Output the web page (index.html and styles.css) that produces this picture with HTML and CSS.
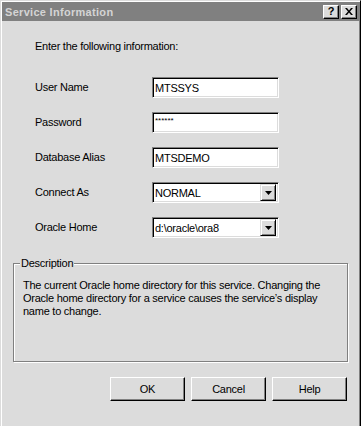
FILE: index.html
```html
<!DOCTYPE html>
<html lang="en">
<head>
    <meta charset="UTF-8">
    <meta name="viewport" content="width=device-width, initial-scale=1.0">
    <title>Service Information</title>
    <link rel="stylesheet" href="styles.css">
</head>
<body>
    <div class="window">
        <div class="titlebar">
            <span class="title">Service Information</span>
            <div class="title-buttons">
                <span class="tbtn">?</span>
                <span class="tbtn">
                    <svg width="8" height="7" viewBox="0 0 8 7">
                        <path d="M0 0h2l2 2.5 2-2.5h2l-3 3.5 3 3.5h-2l-2-2.5-2 2.5h-2l3-3.5z" fill="#000"/>
                    </svg>
                </span>
            </div>
        </div>

        <div class="content">
            <p class="intro">Enter the following information:</p>

            <div class="form">
                <label>User Name</label>
                <div class="field">MTSSYS</div>

                <label>Password</label>
                <div class="field password">******</div>

                <label>Database Alias</label>
                <div class="field">MTSDEMO</div>

                <label>Connect As</label>
                <div class="field combo">
                    <span class="combo-text">NORMAL</span>
                    <span class="arrow-btn">
                        <svg width="7" height="4" viewBox="0 0 7 4"><path d="M0 0h7l-3.5 4z" fill="#000"/></svg>
                    </span>
                </div>

                <label>Oracle Home</label>
                <div class="field combo">
                    <span class="combo-text">d:\oracle\ora8</span>
                    <span class="arrow-btn">
                        <svg width="7" height="4" viewBox="0 0 7 4"><path d="M0 0h7l-3.5 4z" fill="#000"/></svg>
                    </span>
                </div>
            </div>

            <fieldset class="desc">
                <legend>Description</legend>
                <p>The current Oracle home directory for this service. Changing the Oracle home directory for a service causes the service’s display name to change.</p>
            </fieldset>

            <div class="buttons">
                <button>OK</button>
                <button>Cancel</button>
                <button>Help</button>
            </div>
        </div>
    </div>
</body>
</html>
```

FILE: styles.css
```css
body {
    margin: 0;
    font-family: "Liberation Sans", Arial, sans-serif;
    font-size: 11px;
    color: #000;
    background-color: #dcdcdc;
}
.window {
    box-sizing: border-box;
    width: 361px;
    height: 426px;
    border: 1px solid;
    border-color: #dcdcdc #000 #dcdcdc #dcdcdc;
    border-bottom: 0;
    padding: 1px 1px 0 1px;
    box-shadow: inset 1px 1px #fff, inset -1px 0 #808080;
    background-color: #dcdcdc;
}
.titlebar {
    height: 19px;
    background-color: #808080;
    display: flex;
    align-items: center;
    padding: 0 2px 0 3px;
}
.title {
    color: #d4d4d4;
    font-weight: bold;
    letter-spacing: 0.3px;
}
.title-buttons {
    margin-left: auto;
    display: flex;
    gap: 2px;
}
.tbtn {
    box-sizing: border-box;
    width: 16px;
    height: 14px;
    background-color: #dcdcdc;
    border: 1px solid;
    border-color: #fff #000 #000 #fff;
    box-shadow: inset -1px -1px #808080;
    display: flex;
    align-items: center;
    justify-content: center;
    font-weight: bold;
    font-size: 11px;
    line-height: 11px;
}
.content {
    padding: 0 11px;
}
.intro {
    margin: 19px 0 0 22px;
    line-height: 13px;
    letter-spacing: -0.25px;
}
.form {
    display: grid;
    grid-template-columns: 117px 127px;
    row-gap: 14px;
    align-items: center;
    margin: 24px 0 0 22px;
}
.form label {
    line-height: 13px;
    letter-spacing: -0.25px;
}
.field {
    box-sizing: border-box;
    height: 21px;
    background-color: #fff;
    border: 1px solid;
    border-color: #808080 #fff #fff #808080;
    box-shadow: inset 1px 1px #000, inset -1px -1px #dcdcdc;
    padding: 0 2px 0 2px;
    display: flex;
    align-items: center;
    letter-spacing: -0.25px;
}
.password {
    align-items: flex-start;
    font-size: 8px;
    padding-top: 3px;
    letter-spacing: 0;
}
.combo {
    padding: 2px;
}
.combo-text {
    flex: 1;
}
.arrow-btn {
    box-sizing: border-box;
    width: 16px;
    height: 17px;
    background-color: #dcdcdc;
    border: 1px solid;
    border-color: #dcdcdc #000 #000 #dcdcdc;
    box-shadow: inset 1px 1px #fff, inset -1px -1px #808080;
    display: flex;
    align-items: center;
    justify-content: center;
}
.desc {
    box-sizing: border-box;
    height: 105px;
    margin: 19px 0 0 0;
    padding: 9px 8px 0 9px;
    border: 1px solid #808080;
    box-shadow: inset 1px 1px #fff, 1px 1px #fff;
}
.desc legend {
    margin-left: -3px;
    padding: 0 1px;
    line-height: 13px;
    letter-spacing: -0.25px;
    background-color: #dcdcdc;
}
.desc p {
    margin: 0;
    line-height: 13px;
    letter-spacing: -0.25px;
}
.buttons {
    display: flex;
    justify-content: flex-end;
    gap: 6px;
    margin-top: 15px;
    padding-right: 1px;
}
button {
    box-sizing: border-box;
    width: 75px;
    height: 24px;
    padding: 0;
    font: inherit;
    letter-spacing: -0.25px;
    color: #000;
    background-color: #dcdcdc;
    border: 1px solid;
    border-color: #fff #000 #000 #fff;
    box-shadow: inset -1px -1px #808080;
}
```
